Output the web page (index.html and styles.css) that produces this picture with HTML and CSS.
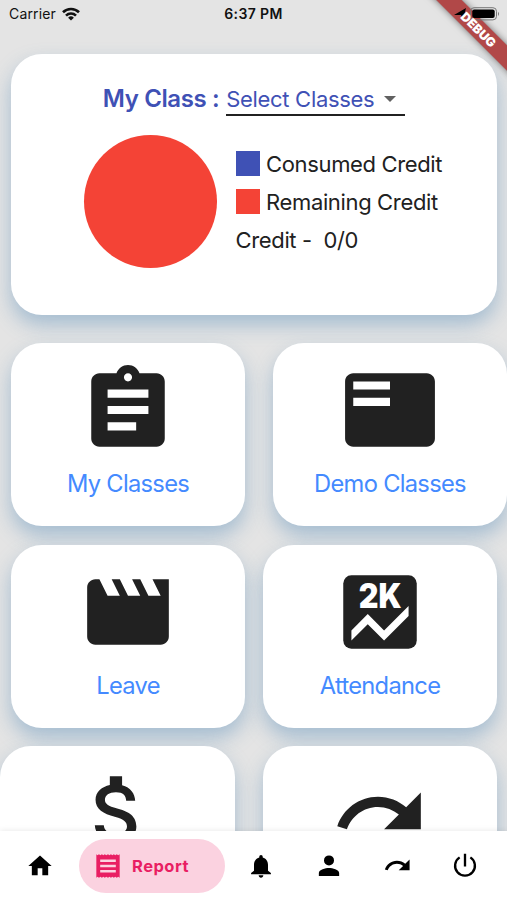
FILE: index.html
```html
<!DOCTYPE html>
<html lang="en">
<head>
  <meta charset="UTF-8" />
  <meta name="viewport" content="width=device-width, initial-scale=1.0" />
  <title>My Class</title>
  <link rel="stylesheet" href="styles.css">
</head>
<body>
  <div class="app">
    <header class="status-bar">
      <div class="carrier">
        <span>Carrier</span>
        <svg class="wifi" viewBox="0 0 18 14"><g fill="none" stroke="#111" stroke-width="2.6"><path d="M1 5.3a11.4 11.4 0 0 1 16 0"/><path d="M4 8.6a7.1 7.1 0 0 1 10 0"/></g><path fill="#111" d="M9 13.6l-2.9-2.9a4.1 4.1 0 0 1 5.8 0z"/></svg>
      </div>
      <span class="time">6:37 PM</span>
      <svg class="battery" viewBox="0 0 46 14"><path d="M0 8L12 1 9 13 7 8z"/><rect x="16.5" y=".7" width="26" height="12.2" rx="3.6" fill="none" stroke="#777"/><rect x="18.3" y="2.5" width="22.4" height="8.6" rx="2"/><path fill="#777" d="M44 4.7q2 2.1 0 4.2z"/></svg>
    </header>
    <div class="debug-banner"></div>
    <div class="debug-banner debug-text">DEBUG</div>

    <main class="content">
      <section class="card summary">
        <div class="class-picker">
          <span class="picker-label">My Class :</span>
          <div class="dropdown">
            <span>Select Classes</span>
            <span class="caret"></span>
          </div>
        </div>
        <div class="credits">
          <div class="pie"></div>
          <div class="legend">
            <div class="legend-row"><span class="swatch consumed"></span>Consumed Credit</div>
            <div class="legend-row"><span class="swatch remaining"></span>Remaining Credit</div>
            <div class="legend-row">Credit -&nbsp; 0/0</div>
          </div>
        </div>
      </section>

      <div class="tile-row push-right">
        <div class="card tile">
          <svg class="tile-icon" viewBox="0 0 24 24"><path d="M19 3h-4.180C14.400 1.840 13.300 1 12 1c-1.300 0-2.400.84-2.820 2H5c-1.100 0-2 .9-2 2v14c0 1.100.9 2 2 2h14c1.100 0 2-.9 2-2V5c0-1.100-.9-2-2-2zm-7 0c.55 0 1 .45 1 1s-.45 1-1 1-1-.45-1-1 .45-1 1-1zm2 14H7v-2h7v2zm3-4H7v-2h10v2zm0-4H7V7h10v2z"/></svg>
          <span class="tile-label">My Classes</span>
        </div>
        <div class="card tile">
          <svg class="tile-icon" viewBox="0 0 24 24"><path d="M21 3H3c-1.100 0-2 .9-2 2v14c0 1.100.9 2 2 2h18c1.100 0 2-.9 2-2V5c0-1.100-.9-2-2-2zm-9 8H3V9h9v2zm0-4H3V5h9v2z"/></svg>
          <span class="tile-label">Demo Classes</span>
        </div>
      </div>

      <div class="tile-row">
        <div class="card tile">
          <svg class="tile-icon" viewBox="0 0 24 24"><path d="M18 4l2 4h-3l-2-4h-2l2 4h-3l-2-4H8l2 4H7L5 4H4c-1.100 0-2 .9-2 2v12c0 1.100.9 2 2 2h16c1.100 0 2-.9 2-2V4h-4z"/></svg>
          <span class="tile-label">Leave</span>
        </div>
        <div class="card tile">
          <svg class="tile-icon" viewBox="0 0 24 24"><rect x="3" y="3" width="18" height="18" rx="2"/><path fill="#fff" d="M19 13l-6 6-4-4-4 4v-2.500l4-4 4 4 6-6z"/><text class="score-text" x="6.800" y="11" textLength="10.500" lengthAdjust="spacingAndGlyphs">2K</text></svg>
          <span class="tile-label">Attendance</span>
        </div>
      </div>

      <div class="tile-row push-left">
        <div class="card tile">
          <svg class="tile-icon" viewBox="0 0 24 24"><path d="M11.800 10.900c-2.270-.59-3-1.200-3-2.150 0-1.090 1.010-1.850 2.700-1.850 1.780 0 2.440.85 2.500 2.100h2.210c-.07-1.720-1.120-3.300-3.210-3.810V3h-3v2.160c-1.940.42-3.500 1.680-3.500 3.610 0 2.310 1.910 3.460 4.700 4.130 2.500.6 3 1.480 3 2.410 0 .69-.49 1.790-2.700 1.790-2.060 0-2.870-.92-2.980-2.100h-2.200c.12 2.190 1.760 3.420 3.680 3.830V21h3v-2.150c1.950-.37 3.500-1.500 3.500-3.550 0-2.840-2.430-3.810-4.700-4.400z"/></svg>
        </div>
        <div class="card tile">
          <svg class="tile-icon" viewBox="0 0 24 24"><path d="M18.400 10.600C16.550 8.990 14.150 8 11.500 8c-4.650 0-8.580 3.030-9.960 7.220L3.900 16c1.050-3.190 4.050-5.500 7.600-5.500 1.950 0 3.730.72 5.120 1.880L13 16h9V7l-3.600 3.600z"/></svg>
        </div>
      </div>
    </main>

    <nav class="bottom-nav">
      <a class="nav-item"><svg viewBox="0 0 24 24"><path d="M10 20v-6h4v6h5v-8h3L12 3 2 12h3v8z"/></svg></a>
      <a class="nav-item active">
        <svg viewBox="0 0 24 24"><path fill-rule="evenodd" d="M2 2l1 .8L4.250 2l1.250.8L6.750 2 8 2.800 9.250 2l1.250.8L12 2l1.250.8L14.500 2l1.250.8L17 2l1.250.8L19.500 2l1.250.8L22 2v20l-1.250-.8-1.250.8-1.250-.8L17 22l-1.250-.8-1.250.8-1.250-.8L12 22l-1.500-.8-1.250.8L8 21.200 6.750 22l-1.250-.8L4.250 22 3 21.200 2 22zM5.300 6.500v2h13.400v-2zm0 4.500v2h13.400v-2zm0 4.500v2h13.400v-2z"/></svg>
        <span>Report</span>
      </a>
      <a class="nav-item"><svg viewBox="0 0 24 24"><path d="M12 22c1.100 0 2-.9 2-2h-4c0 1.100.9 2 2 2zm6-6v-5c0-3.070-1.630-5.640-4.500-6.320V4a1.500 1.500 0 0 0-3 0v.68C7.640 5.360 6 7.920 6 11v5l-2.500 2v1h17v-1z"/></svg></a>
      <a class="nav-item"><svg viewBox="0 0 24 24"><path d="M12 11.500a4.300 4.300 0 1 0 0-8.600 4.300 4.300 0 0 0 0 8.600zm0 2.200c-3 0-8.700 1.300-8.700 4.300v2.500h17.400V18c0-3-5.700-4.300-8.700-4.300z"/></svg></a>
      <a class="nav-item"><svg class="nav-redo" viewBox="0 0 24 24"><path d="M18.400 10.600C16.550 8.990 14.150 8 11.500 8c-4.650 0-8.580 3.030-9.960 7.220L3.900 16c1.050-3.190 4.050-5.500 7.600-5.500 1.950 0 3.730.72 5.120 1.880L13 16h9V7l-3.600 3.600z"/></svg></a>
      <a class="nav-item"><svg viewBox="0 0 24 24"><path fill="none" stroke="#000" stroke-width="2" d="M12 1.500v11M7.400 4.600a8.500 8.500 0 1 0 9.200 0"/></svg></a>
    </nav>
  </div>
</body>
</html>
```

FILE: styles.css
```css
* {
  box-sizing: border-box;
}

body {
  margin: 0;
  font-family: Inter, "Liberation Sans", sans-serif;
  color: #212121;
}

.app {
  position: relative;
  display: flex;
  flex-direction: column;
  width: 507px;
  height: 900px;
  overflow: hidden;
  background: #e4e4e4;
}

.status-bar {
  position: relative;
  z-index: 2;
  display: grid;
  grid-template-columns: 1fr auto 1fr;
  align-items: center;
  flex: none;
  height: 27px;
  padding: 0 7px;
  font-size: 14px;
  color: #111;
}

.carrier {
  display: flex;
  align-items: center;
  gap: 6px;
  padding-left: 2px;
  letter-spacing: 0.15px;
}

.wifi {
  width: 18px;
  height: 14px;
}

.time {
  font-weight: 600;
  letter-spacing: 0.4px;
}

.battery {
  justify-self: end;
  width: 46px;
  height: 14px;
}

.debug-banner {
  position: absolute;
  z-index: 1;
  top: 20px;
  right: -36px;
  width: 130px;
  height: 18px;
  line-height: 18px;
  transform: rotate(45deg);
  background: rgba(160, 20, 20, 0.75);
  box-shadow: 0 0 7px rgba(0, 0, 0, 0.5);
  color: #fff;
  font-size: 12.5px;
  font-weight: 900;
  text-align: center;
}

/* label sits above the status icons, ribbon below them */
.debug-text {
  z-index: 3;
  top: 21px;
  background: none;
  box-shadow: none;
}

.content {
  flex: 1;
  min-height: 0;
  padding: 27px 10px 0 11px;
  overflow: hidden;
}

.card {
  background: #fff;
  border-radius: 31px;
  box-shadow: 0 10px 20px rgba(70, 130, 180, 0.4);
}

.summary {
  height: 261px;
  margin-bottom: 28px;
  padding: 30px 0 0;
}

.class-picker {
  display: flex;
  justify-content: center;
  gap: 7px;
  font-size: 22px;
  line-height: 30px;
  letter-spacing: -0.3px;
  color: #3f51b5;
}

.picker-label {
  font-size: 24px;
  font-weight: 600;
  letter-spacing: -0.4px;
}

.dropdown {
  display: flex;
  align-items: center;
  justify-content: space-between;
  width: 179px;
  height: 32px;
  padding-right: 9px;
  border-bottom: 2px solid #212121;
  white-space: nowrap;
}

.caret {
  border: 6px solid transparent;
  border-top-color: #616161;
  border-bottom: 0;
}

.credits {
  display: flex;
  gap: 19px;
  padding: 19px 0 0 72.5px;
}

.pie {
  width: 133px;
  height: 133px;
  border-radius: 50%;
  background: #f44336;
}

.legend {
  display: flex;
  flex-direction: column;
  gap: 8px;
  padding-top: 13.5px;
}

.legend-row {
  display: flex;
  align-items: center;
  gap: 6px;
  height: 30px;
  font-size: 22px;
  letter-spacing: -0.35px;
  white-space: nowrap;
}

.swatch {
  width: 24.5px;
  height: 24.5px;
}

.consumed {
  background: #3f51b5;
}

.remaining {
  background: #f44336;
}

.tile-row {
  display: flex;
  justify-content: space-between;
  margin-bottom: 18.5px;
}

.push-right {
  margin-right: -10px;
}

.push-left {
  margin-left: -11px;
}

.push-left .tile:first-child {
  width: 235px;
}

.tile {
  display: flex;
  flex-direction: column;
  align-items: center;
  width: 234px;
  height: 183px;
  padding-top: 18px;
}

.tile-icon {
  flex: none;
  width: 98px;
  height: 98px;
  fill: #212121;
}

.score-text {
  fill: #fff;
  font-size: 8.2px;
  font-weight: 900;
}

.tile-label {
  margin-top: 10px;
  font-size: 23.7px;
  line-height: 30px;
  letter-spacing: -0.7px;
  color: #448aff;
}

.bottom-nav {
  position: relative;
  display: flex;
  align-items: center;
  flex: none;
  height: 69px;
  padding-left: 6px;
  background: #fff;
  box-shadow: 0 0 6px rgba(0, 0, 0, 0.1);
}

.nav-item {
  display: flex;
  align-items: center;
  justify-content: center;
  width: 68px;
  height: 54px;
}

.nav-item svg {
  width: 28px;
  height: 28px;
}

.nav-item .nav-redo {
  width: 29px;
  height: 29px;
}

.nav-item.active {
  justify-content: flex-start;
  gap: 10px;
  width: 146px;
  margin: 0 2px 0 5px;
  padding-left: 15px;
  border-radius: 27px;
  background: #fbd2e0;
  color: #e91e63;
  font-size: 16.5px;
  font-weight: 700;
  letter-spacing: 0.5px;
}

.nav-item.active svg {
  fill: #e91e63;
}
```
